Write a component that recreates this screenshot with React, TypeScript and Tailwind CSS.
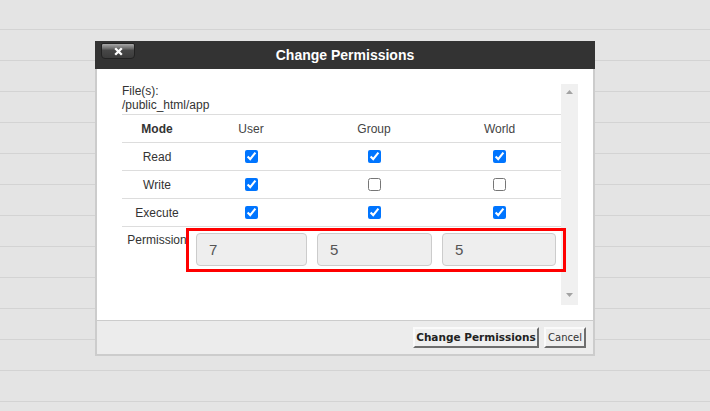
const bgRows = Array.from({ length: 14 }, (_, i) => i);

type Perm = { mode: string; user: boolean; group: boolean; world: boolean };

const perms: Perm[] = [
  { mode: 'Read', user: true, group: true, world: true },
  { mode: 'Write', user: true, group: false, world: false },
  { mode: 'Execute', user: true, group: true, world: true },
];

function Check({ checked }: { checked: boolean }) {
  return <input type="checkbox" defaultChecked={checked} className="m-0 h-[13px] w-[13px]" />;
}

function ScrollArrow({ up }: { up?: boolean }) {
  return (
    <svg width="7" height="4" viewBox="0 0 7 4" className="block">
      <path d={up ? 'M0 4 L3.5 0 L7 4 Z' : 'M0 0 L3.5 4 L7 0 Z'} fill="#a3a3a3" />
    </svg>
  );
}

export default function App() {
  return (
    <div className="relative h-[411px] w-full overflow-hidden bg-[#e4e4e4] font-['Liberation_Sans',Arial,sans-serif]">
      {/* page behind the modal */}
      <div>
        {bgRows.map(i => (
          <div key={i} className={`${i === 0 ? 'h-[30px]' : 'h-[31px]'} border-b border-[#d3d3d3]`} />
        ))}
      </div>

      {/* modal */}
      <div className="absolute left-[95px] top-[41px] w-[500px]">
        <div className="relative flex h-[28px] items-center justify-center bg-[#333]">
          <button className="absolute left-[6px] top-[2px] flex h-[16px] w-[34px] items-center justify-center rounded-b-[4px] rounded-t-[2px] border border-[#222] bg-[linear-gradient(to_bottom,#a8a8a8_0%,#707070_30%,#474747_45%,#3b3b3b_100%)]">
            <svg width="9" height="9" viewBox="0 0 9 9">
              <path d="M1.2 1.2 L7.8 7.8 M7.8 1.2 L1.2 7.8" stroke="#fff" strokeWidth="2.3" />
            </svg>
          </button>
          <h2 className="text-[14px] font-bold text-white">Change Permissions</h2>
        </div>

        <div className="border-x-2 border-b-2 border-[#ccc] bg-white">
          <div className="flex h-[251px] pl-[25px] pr-[15px] pt-[15px]">
            <div className="w-[439px] text-[12px] leading-[14px] text-[#444]">
              <div className="mb-[2px] text-[#333]">
                <div>File(s):</div>
                <div>/public_html/app</div>
              </div>

              <div className="flex h-[28px] items-center border-t border-[#ddd] text-center">
                <div className="w-[70px] font-bold text-[#333]">Mode</div>
                <div className="w-[118px]">User</div>
                <div className="w-[128px]">Group</div>
                <div className="w-[123px]">World</div>
              </div>

              {perms.map(p => (
                <div key={p.mode} className="flex h-[28px] items-center border-t border-[#ddd] text-center">
                  <div className="w-[70px] text-[#333]">{p.mode}</div>
                  <div className="flex w-[118px] justify-center"><Check checked={p.user} /></div>
                  <div className="flex w-[128px] justify-center"><Check checked={p.group} /></div>
                  <div className="flex w-[123px] justify-center"><Check checked={p.world} /></div>
                </div>
              ))}

              <div className="relative flex items-start border-t border-[#ddd] pt-[6px]">
                <div className="w-[70px] whitespace-nowrap text-center text-[#333]">Permission</div>
                <input readOnly value="7" className="ml-[4px] h-[33px] w-[111px] rounded-[4px] border border-[#ccc] bg-[#eee] px-[12px] text-[15px] text-[#555] outline-none" />
                <input readOnly value="5" className="ml-[10px] h-[33px] w-[115px] rounded-[4px] border border-[#ccc] bg-[#eee] px-[12px] text-[15px] text-[#555] outline-none" />
                <input readOnly value="5" className="ml-[10px] h-[33px] w-[114px] rounded-[4px] border border-[#ccc] bg-[#eee] px-[12px] text-[15px] text-[#555] outline-none" />
                {/* highlight around the permission inputs */}
                <div className="absolute left-[64px] top-[1px] z-10 h-[44px] w-[380px] border-[3px] border-[#f00]" />
              </div>
            </div>

            <div className="flex h-[221px] w-[17px] flex-col items-center justify-between bg-[#f0f0f0] pb-[8px] pt-[6px]">
              <ScrollArrow up />
              <ScrollArrow />
            </div>
          </div>

          <div className="flex h-[34px] items-start justify-end gap-[5px] border-t border-[#ccc] bg-[#ececec] pr-[7px] pt-[6px] font-['DejaVu_Sans',Verdana,sans-serif]">
            <button className="h-[21px] w-[126px] border-2 border-b-[#6e6e6e] border-l-[#fafafa] border-r-[#6e6e6e] border-t-[#fafafa] bg-[#efefef] text-[10.5px] font-bold text-[#222]">
              Change Permissions
            </button>
            <button className="h-[21px] w-[42px] border-2 border-b-[#6e6e6e] border-l-[#fafafa] border-r-[#6e6e6e] border-t-[#fafafa] bg-[#efefef] text-[10px] text-[#333]">
              Cancel
            </button>
          </div>
        </div>
      </div>
    </div>
  );
}
